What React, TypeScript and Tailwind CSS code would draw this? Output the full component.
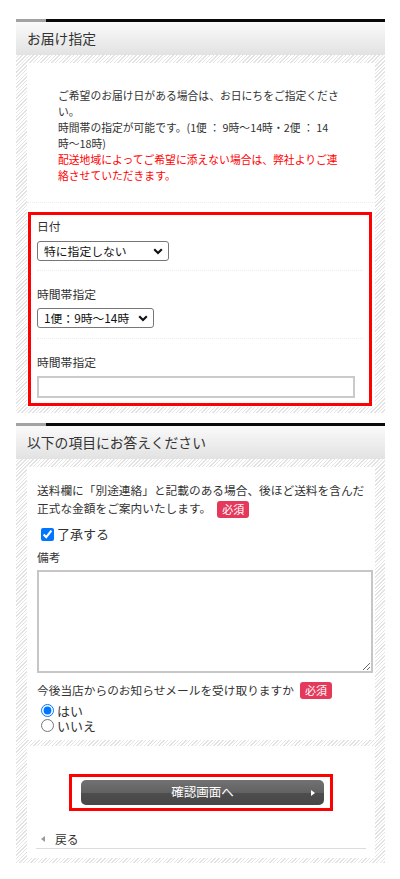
import React from "react";

const hatch =
  "bg-[image:repeating-linear-gradient(135deg,#ffffff_0px,#ffffff_1.6px,#e3e3e3_1.6px,#e3e3e3_2.6px)]";

function SectionHead({ title }: { title: string }) {
  return (
    <div>
      <div className="flex h-[3px]">
        <div className="w-[30px] bg-[#a3a3a3]" />
        <div className="flex-1 bg-[#0a0a0a]" />
      </div>
      <div className="flex h-[33px] items-center bg-[linear-gradient(#fafafa,#e2e2e2)] pl-[11px] text-[13.8px] leading-none text-[#333]">
        {title}
      </div>
    </div>
  );
}

function Chevron() {
  return (
    <svg width="10" height="7" viewBox="0 0 10 7" className="shrink-0">
      <path d="M1.2 1.2 L5 5 L8.8 1.2" fill="none" stroke="#111" strokeWidth="2.1" />
    </svg>
  );
}

function FakeSelect({ label, width }: { label: string; width: string }) {
  return (
    <div
      className={`flex h-[20px] items-center justify-between rounded-[3px] border border-[#767676] bg-white pl-[6px] pr-[5px] text-[11.8px] leading-none text-[#111] ${width}`}
    >
      <span>{label}</span>
      <Chevron />
    </div>
  );
}

function Badge() {
  return (
    <span className="inline-flex h-[17px] w-[32px] items-center justify-center rounded-[3px] bg-[#e5395c] text-[11px] leading-none text-white">
      必須
    </span>
  );
}

export default function App() {
  return (
    <div className="min-h-[879px] bg-white pt-[19px] font-['Noto_Sans_CJK_JP','Noto_Sans',sans-serif] text-[#333]">
      <div className="ml-[16px] w-[369px]">
        {/* Section 1 */}
        <SectionHead title="お届け指定" />
        <div className={`${hatch} pb-[6px] pl-[11px] pr-[10px] pt-[8px]`}>
          <div className="bg-white pb-[1px]">
            <div className="border-b border-dotted border-[#ececec] pb-[19px] pl-[31px] pt-[24px] text-[10.8px] leading-[16px]">
              <p className="whitespace-nowrap">
                ご希望のお届け日がある場合は、お日にちをご指定くださ
                <br />
                い。
                <br />
                時間帯の指定が可能です。(1便 ： 9時〜14時・2便 ： 14
                <br />
                時〜18時)
              </p>
              <p className="whitespace-nowrap text-[#ff0000]">
                配送地域によってご希望に添えない場合は、弊社よりご連
                <br />
                絡させていただきます。
              </p>
            </div>

            <div className="ml-[1px] mr-[3px] mt-[9px] border-[3px] border-[#ff0000] px-[6px] text-[11.8px] leading-[16px]">
              <div className="border-b border-dotted border-[#ececec] pb-[9px] pt-[3px]">
                <div>日付</div>
                <div className="mt-[7px]">
                  <FakeSelect label="特に指定しない" width="w-[132px]" />
                </div>
              </div>
              <div className="border-b border-dotted border-[#ececec] pb-[10px] pt-[15px]">
                <div>時間帯指定</div>
                <div className="mt-[6px]">
                  <FakeSelect label="1便：9時〜14時" width="w-[117px]" />
                </div>
              </div>
              <div className="pb-[5px] pt-[15px]">
                <div>時間帯指定</div>
                <div className="mt-[6px] h-[22px] w-[318px] border-2 border-[#cacaca] bg-white" />
              </div>
            </div>
          </div>
        </div>

        <div className="h-[10px]" />

        {/* Section 2 */}
        <SectionHead title="以下の項目にお答えください" />
        <div className={`${hatch} pb-[5px] pl-[11px] pr-[10px] pt-[8px]`}>
          <div className="bg-white pb-[7px] pl-[10px] pt-[15px] text-[11.7px] leading-[16px]">
            <p className="whitespace-nowrap">
              送料欄に「別途連絡」と記載のある場合、後ほど送料を含んだ
              <br />
              <span className="inline-flex items-center">
                正式な金額をご案内いたします。
                <span className="ml-[6px] mt-[3px] inline-flex">
                  <Badge />
                </span>
              </span>
            </p>
            <label className="mt-[8px] flex h-[16px] items-center text-[13px] leading-[16px]">
              <input
                type="checkbox"
                defaultChecked
                className="m-0 ml-[4px] mr-[3px] h-[13px] w-[13px]"
              />
              <span className="block">了承する</span>
            </label>
            <div className="mt-[7px]">備考</div>
            <textarea className="mt-[5px] block h-[103px] w-[336px] border-2 border-[#c6c6c6] bg-white outline-none" />
            <div className="mt-[9px] flex h-[16px] items-center">
              <span className="block">今後当店からのお知らせメールを受け取りますか</span>
              <span className="ml-[6px] inline-flex">
                <Badge />
              </span>
            </div>
            <div className="mt-[5px] text-[13px] leading-[15px]">
              <label className="flex h-[15px] items-center">
                <input
                  type="radio"
                  name="mail"
                  defaultChecked
                  className="m-0 ml-[4px] mr-[3px] h-[13px] w-[13px]"
                />
                <span className="block h-[15px]">はい</span>
              </label>
              <label className="flex h-[15px] items-center">
                <input
                  type="radio"
                  name="mail"
                  className="m-0 ml-[4px] mr-[3px] h-[13px] w-[13px]"
                />
                <span className="block h-[15px]">いいえ</span>
              </label>
            </div>
          </div>

          <div className="mt-[6px] bg-white pb-[9px] pt-[28px]">
            <div className="mx-auto flex h-[37px] w-[264px] items-center border-[3px] border-[#ff0000] pl-[9px] pr-[6px]">
              <button className="relative flex h-[25px] w-[243px] items-center justify-center rounded-[5px] bg-[linear-gradient(#717171_0%,#626262_50%,#4d4d4d_52%,#474747_100%)] text-[12.5px] leading-none text-white">
                確認画面へ
                <svg
                  width="4"
                  height="6"
                  viewBox="0 0 4 6"
                  className="absolute right-[9px] top-[10px]"
                >
                  <path d="M0 0 L4 3 L0 6 Z" fill="#fff" />
                </svg>
              </button>
            </div>
            <div className="mx-[9px] mt-[20px] flex h-[18px] items-start border-b border-[#dcdcdc] text-[11.8px] leading-[16px]">
              <div className="flex h-[16px] items-center pl-[5px]">
                <svg width="4" height="6" viewBox="0 0 4 6">
                  <path d="M4 0 L0 3 L4 6 Z" fill="#9a9a9a" />
                </svg>
                <span className="ml-[10px]">戻る</span>
              </div>
            </div>
          </div>
        </div>
      </div>
    </div>
  );
}
